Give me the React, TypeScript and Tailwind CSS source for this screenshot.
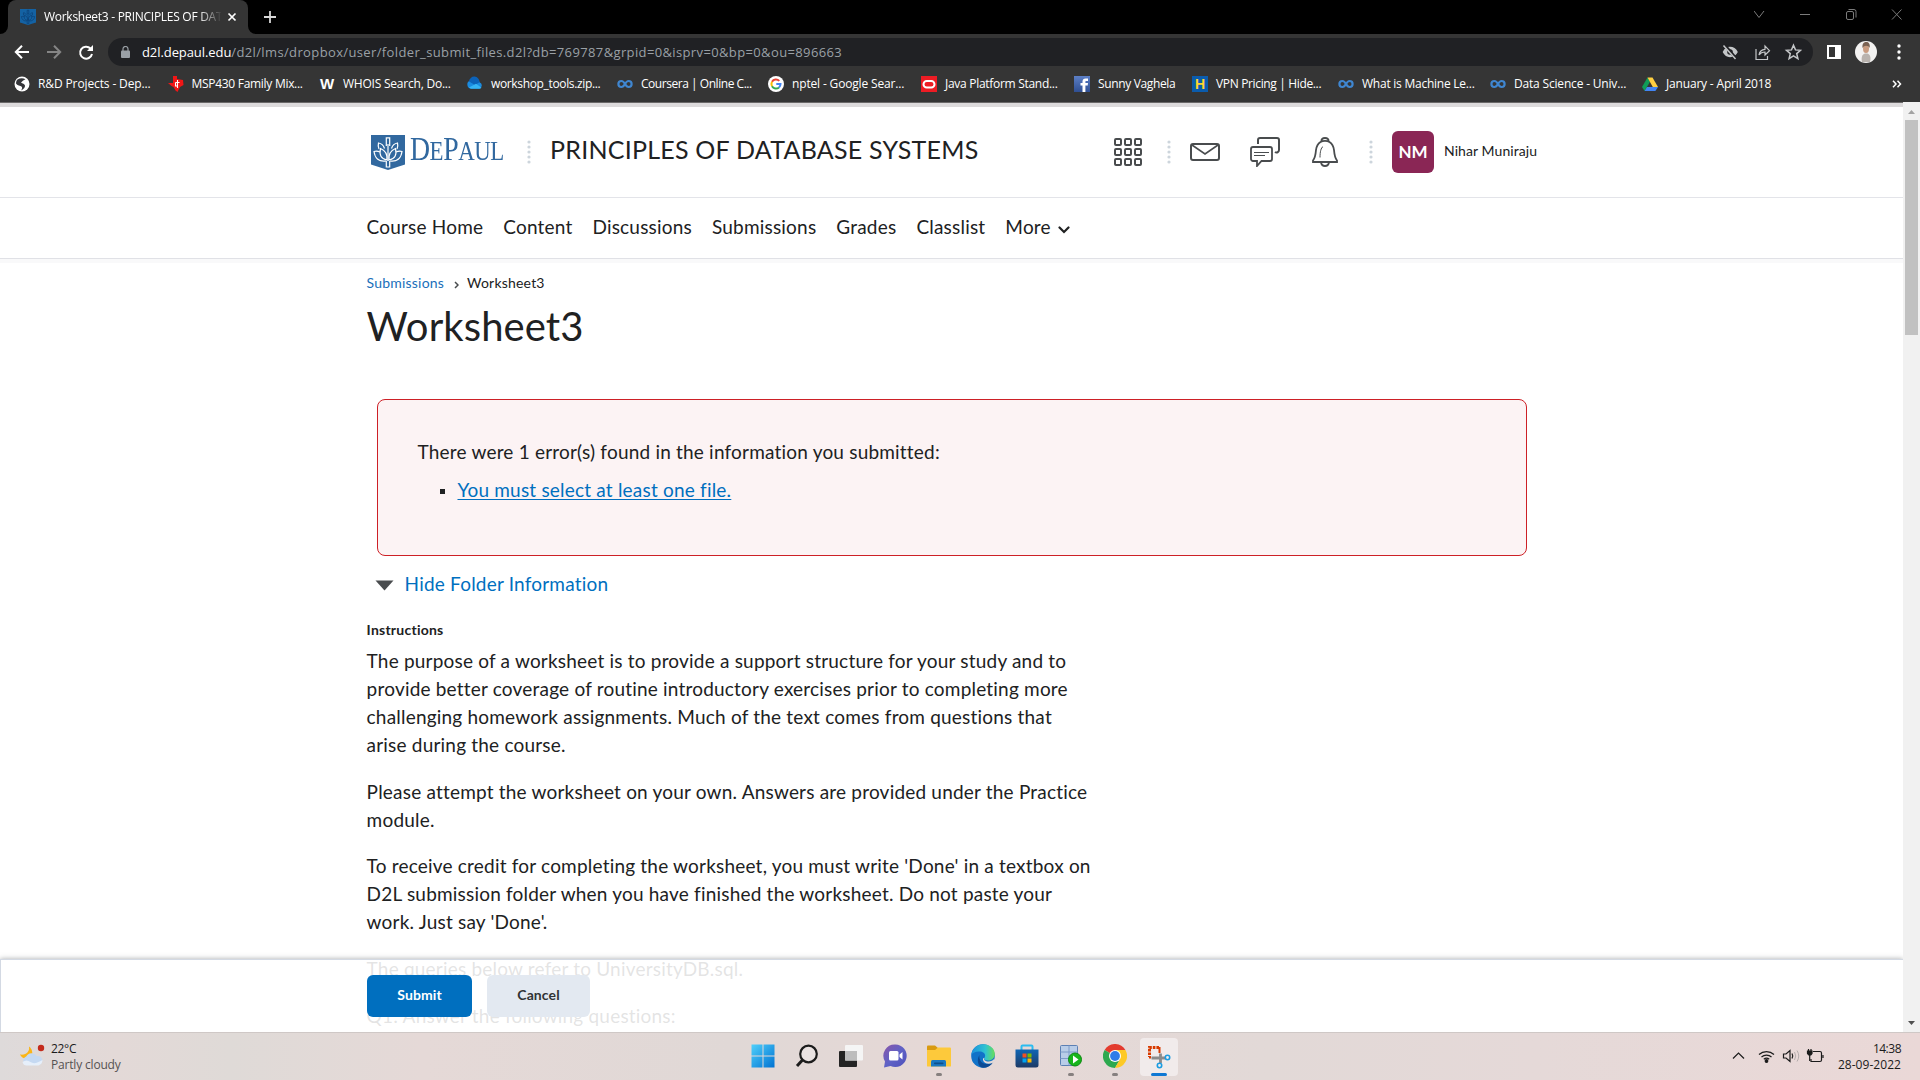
import React from "react";

const UI = "font-['Open_Sans','Noto_Sans',sans-serif]";

function Infinity_() {
  return (
    <svg width="16" height="16" viewBox="0 0 16 16" fill="none" stroke="#3f86d0" strokeWidth="2.200">
      <path d="M8 8C6.800 5.800 5.800 5 4.400 5a3 3 0 0 0 0 6C5.800 11 6.800 10.200 8 8s2.200-3 3.600-3a3 3 0 0 1 0 6C10.200 11 9.200 10.200 8 8z" />
    </svg>
  );
}

const Globe = () => (
  <svg width="16" height="16" viewBox="0 0 16 16">
    <circle cx="8" cy="8" r="7.500" fill="#fff" />
    <path d="M3.500 3.500C6 2 9 2 11.500 3.200 9.500 4 8 5 7 6.800c1.500.8 3.500 1 4 2.700.3 2-1.500 3.800-4 5 1-1.500 1.500-2.500.8-3.800C6.500 9.500 3 9.500 2 7.500c0-1.500.5-3 1.500-4z" fill="#35363a" />
  </svg>
);
const Texas = () => (
  <svg width="16" height="16" viewBox="0 0 16 16">
    <path d="M5 0h4v3l6 1 .5 5-3.500 2-2.500 5-2-1.500L5.500 11 3.500 10 0 7h5z" fill="#f01616" />
    <path d="M9.500 4v8M7.500 6.500h4M7.500 6.500v3.500h2.500" stroke="#fff" strokeWidth="1.100" fill="none" />
  </svg>
);
const LetterW = () => (
  <span className="w-4 text-center text-[15px] leading-4 font-black text-white font-['Liberation_Sans',sans-serif]">W</span>
);
const Cloud = () => (
  <svg width="16" height="16" viewBox="0 0 16 16">
    <path d="M4 12.500a4 4 0 0 1-.5-7.900 5 5 0 0 1 9 1.600A3.300 3.300 0 0 1 12.500 12.500z" fill="#1a8be0" />
    <path d="M2 5.500a5 5 0 0 1 10.500.700L8 9z" fill="#0c62b8" />
    <path d="M2 11.500 9 7.800l5.500 4q-.8.900-2 .9H4q-1.200-.2-2-1.200z" fill="#35b4f5" />
  </svg>
);
const Google = () => (
  <svg width="16" height="16" viewBox="0 0 16 16" fill="none" strokeWidth="2">
    <circle cx="8" cy="8" r="8" fill="#fff" />
    <path d="M11.300 4.900A4.600 4.600 0 0 0 4 5.800" stroke="#ea4335" />
    <path d="M4 5.800a4.600 4.600 0 0 0 0 4.400" stroke="#fbbc05" />
    <path d="M4 10.200a4.600 4.600 0 0 0 7 1.200" stroke="#34a853" />
    <path d="M11 11.400A4.600 4.600 0 0 0 12.500 8H8.300" stroke="#4285f4" />
  </svg>
);
const Oracle = () => (
  <svg width="16" height="16" viewBox="0 0 16 16">
    <rect width="16" height="16" fill="#ed1c24" />
    <rect x="2.500" y="5" width="11" height="6.500" rx="3.250" fill="none" stroke="#fff" strokeWidth="2" />
  </svg>
);
const Facebook = () => (
  <svg width="16" height="16" viewBox="0 0 16 16">
    <defs>
      <linearGradient id="fb" x1="0" y1="0" x2="0" y2="1">
        <stop offset="0" stopColor="#5c7fc6" />
        <stop offset="1" stopColor="#2f4f93" />
      </linearGradient>
    </defs>
    <rect width="16" height="16" fill="url(#fb)" />
    <path d="M8.500 16V9.500h-2V7h2V5.500C8.500 3.500 9.700 2.500 11.500 2.500H14V5h-1.600c-.8 0-1 .3-1 1v1H14l-.3 2.500h-2.300V16z" fill="#fff" />
  </svg>
);
const LetterH = () => (
  <span className="w-4 h-4 bg-[#0b5cad] text-center text-[14px] leading-4 font-black text-[#ffd52e] font-['Liberation_Sans',sans-serif]">H</span>
);
const Drive = () => (
  <svg width="16" height="16" viewBox="0 0 16 16">
    <path d="M5.500 1.500 0 11l2.600 4L8 5.800z" fill="#0f9d58" />
    <path d="M5.500 1.500h5L16 11h-5.200z" fill="#ffcf40" />
    <path d="M5 11h11l-2.600 4H2.600z" fill="#4285f4" />
  </svg>
);

const bookmarks = [
  { w: "w-[153.500px]", t: "R&D Projects - Dep...", s: "tracking-[-0.120px]", i: <Globe /> },
  { w: "w-[151.500px]", t: "MSP430 Family Mix...", s: "tracking-[-0.290px]", i: <Texas /> },
  { w: "w-[148px]", t: "WHOIS Search, Do...", s: "tracking-[-0.220px]", i: <LetterW /> },
  { w: "w-[150px]", t: "workshop_tools.zip...", s: "tracking-[-0.350px]", i: <Cloud /> },
  { w: "w-[151px]", t: "Coursera | Online C...", s: "tracking-[-0.460px]", i: <Infinity_ /> },
  { w: "w-[153px]", t: "nptel - Google Sear...", s: "tracking-[-0.160px]", i: <Google /> },
  { w: "w-[153px]", t: "Java Platform Stand...", s: "tracking-[-0.290px]", i: <Oracle /> },
  { w: "w-[118px]", t: "Sunny Vaghela", s: "tracking-[-0.350px]", i: <Facebook /> },
  { w: "w-[146px]", t: "VPN Pricing | Hide...", s: "tracking-[-0.350px]", i: <LetterH /> },
  { w: "w-[152px]", t: "What is Machine Le...", s: "tracking-[-0.240px]", i: <Infinity_ /> },
  { w: "w-[152px]", t: "Data Science - Univ...", s: "tracking-[-0.180px]", i: <Infinity_ /> },
  { w: "w-[200px]", t: "January - April 2018", s: "tracking-[-0.180px]", i: <Drive /> },
];

function Shield({ w, h, fill, stroke, sw }: { w: number; h: number; fill: string; stroke: string; sw: number }) {
  return (
    <svg width={w} height={h} viewBox="0 0 34 35" preserveAspectRatio="none" className="shrink-0">
      <path d="M0 0h34v29.500L17 35 0 29.500z" fill={fill} />
      <g fill="none" stroke={stroke} strokeWidth={sw}>
        <path d="M15.300 11V2.800h3.400V11M15.300 26v6h3.400v-6" />
        <path d="M17 9v17" />
        <path d="M16 25c-6-1-8-5-6.500-11.500 5 2 7 6 6.500 11.500zM18 25c6-1 8-5 6.500-11.500-5 2-7 6-6.500 11.500z" />
        <path d="M15 26c-7 1-11-2.500-12-9.500 2-.6 4-.4 6 .5M19 26c7 1 11-2.500 12-9.500-2-.6-4-.4-6 .5" />
        <path d="M8 14c-1-2-1-4-.5-6 3 .5 5 2.500 6 5.500M26 14c1-2 1-4 .5-6-3 .5-5 2.500-6 5.500" />
      </g>
    </svg>
  );
}

function Chrome_() {
  return (
    <div className={`flex h-[102px] shrink-0 flex-col bg-[#353535] ${UI}`}>
      <div className="flex h-[34px] bg-black">
        <div className="flex w-[8px] items-end bg-[#353535]">
          <div className="h-full w-full rounded-br-[8px] bg-black" />
        </div>
        <div className="flex w-[240px] bg-black">
          <div className="flex w-full items-center rounded-t-[8px] bg-[#353535] pl-3">
            <Shield w={16} h={16} fill="#1462a3" stroke="#0b3f75" sw={1.500} />
            <div className="ml-2 w-[177px] text-[12px] tracking-[-0.280px] whitespace-nowrap text-white [mask-image:linear-gradient(to_right,black_154px,transparent_178px)]">
              Worksheet3 - PRINCIPLES OF DAT
            </div>
            <svg width="10" height="10" viewBox="0 0 10 10" className="ml-[6px]" stroke="#fff" strokeWidth="1.700">
              <path d="M1.500 1.500l7 7M8.500 1.500l-7 7" />
            </svg>
          </div>
        </div>
        <div className="flex w-[8px] bg-[#353535]">
          <div className="h-full w-full rounded-bl-[8px] bg-black" />
        </div>
        <svg width="14" height="34" viewBox="0 0 14 34" className="ml-[7px]" stroke="#d8d8d8" strokeWidth="1.800">
          <path d="M1 17h12M7 11v12" />
        </svg>
        <svg width="150" height="34" viewBox="0 0 150 34" className="mr-[16px] ml-auto" fill="none" stroke="#7b7b7b" strokeWidth="1">
          <path d="M0 11l5 6.500 5-6.500M46 14.500h10" />
          <rect x="92.500" y="11.500" width="7" height="8" rx="1.500" />
          <path d="M94.500 9.500h5.500a2 2 0 0 1 2 2v6M138 9.500l9.500 10M147.500 9.500l-9.500 10" />
        </svg>
      </div>
      <div className="flex h-[36px] items-center">
        <svg width="84" height="20" viewBox="0 0 84 20" className="ml-[14px]" fill="none" strokeWidth="2">
          <path d="M15 10H2M8 3.800 1.800 10 8 16.200" stroke="#fff" />
          <path d="M33 10h13M40 3.800 46.200 10 40 16.200" stroke="#858585" />
          <path d="M76.500 6.500A6 6 0 1 0 78 12" stroke="#fff" />
          <path d="M79 3v6h-6z" fill="#fff" stroke="none" />
        </svg>
        <div className="ml-[10px] flex h-[28px] w-[1705px] items-center rounded-full bg-[#202124] pl-[13px]">
          <svg width="9" height="12" viewBox="0 0 9 12">
            <rect x="0" y="4.500" width="9" height="7.500" rx="1" fill="#9aa0a6" />
            <path d="M2 5V3a2.500 2.500 0 0 1 5 0v2" fill="none" stroke="#9aa0a6" strokeWidth="1.200" />
          </svg>
          <div className="ml-[12px] text-[13px] leading-[18px] whitespace-nowrap text-[#9aa0a6]">
            <span className="tracking-[-0.080px] text-white">d2l.depaul.edu</span>
            <span className="tracking-[0.370px]">/d2l/lms/dropbox/user/folder_submit_files.d2l?db=769787&amp;grpid=0&amp;isprv=0&amp;bp=0&amp;ou=896663</span>
          </div>
          <svg width="80" height="18" viewBox="0 0 80 18" className="mr-[11px] ml-auto" fill="none" stroke="#c4c6c8" strokeWidth="1.500">
            <path d="M1.500 9C3 6 5.500 4.500 8 4.500S13.500 6 15 9c-1.500 3-4.500 4.500-7 4.500S3 12 1.500 9z" fill="#c4c6c8" />
            <circle cx="8" cy="9" r="2.800" fill="#202124" stroke="none" />
            <path d="M2.500 2l12 14" stroke="#202124" strokeWidth="3" />
            <path d="M1.500 2.500l12 13.500" />
            <path d="M34 6v10.500h11.500V13M37 12c.5-3.500 2.500-5.500 6-5.700V3l4.500 4.700L43 12V9c-2.500 0-4.500.8-6 3z" strokeWidth="1.200" />
            <path d="M71.500 2.200l2 4.700 5 .4-3.800 3.300 1.200 5-4.400-2.700-4.400 2.700 1.200-5-3.800-3.300 5-.4z" />
          </svg>
        </div>
        <svg width="15" height="14" viewBox="0 0 15 14" className="ml-[14px]">
          <rect width="14" height="14" fill="#fff" />
          <rect x="2" y="2" width="6" height="10" fill="#353535" />
        </svg>
        <svg width="22" height="22" viewBox="0 0 22 22" className="ml-[13px]">
          <circle cx="11" cy="11" r="11" fill="#f3f2f1" />
          <path d="M7 21c-.8-4-.4-7.500 3-8.500h2.500c3 1 3.500 4.500 2.500 8.500z" fill="#b9b3ae" />
          <ellipse cx="11" cy="7.500" rx="3" ry="4.500" fill="#c99c80" />
          <path d="M7.500 7C7 2.500 9 1 11.300 1s4 1.800 3.400 6C13.500 4.500 9.500 3.500 7.500 7z" fill="#7a6252" />
        </svg>
        <svg width="4" height="16" viewBox="0 0 4 16" className="ml-[20px]" fill="#fff">
          <circle cx="2" cy="2" r="1.700" />
          <circle cx="2" cy="8" r="1.700" />
          <circle cx="2" cy="14" r="1.700" />
        </svg>
      </div>
      <div className="flex h-[28px] items-center pl-[14px] text-[12px] text-white">
        {bookmarks.map((b) => (
          <div key={b.t} className={`flex shrink-0 items-center gap-2 whitespace-nowrap ${b.w} ${b.s}`}>
            {b.i}
            <span>{b.t}</span>
          </div>
        ))}
        <svg width="10" height="8" viewBox="0 0 10 8" className="mr-[18px] ml-auto" fill="none" stroke="#fff" strokeWidth="1.500">
          <path d="M1 .8 4 4 1 7.200M5.500.8l3 3.200-3 3.200" />
        </svg>
      </div>
    </div>
  );
}

const Dots = ({ className }: { className: string }) => (
  <svg width="4" height="24" viewBox="0 0 4 24" fill="#cdd5dc" className={`shrink-0 ${className}`}>
    {[2, 7, 12, 17, 22].map((y) => (
      <circle key={y} cx="2" cy={y} r="1.600" />
    ))}
  </svg>
);

function Header() {
  return (
    <header className="flex h-[91px] shrink-0 items-center border-b border-[#e3e4e9] pl-[371px]">
      <Shield w={34} h={35} fill="#31689f" stroke="#fff" sw={1.200} />
      <div className="ml-[5px] h-[36px] w-[95px] shrink-0">
        <div className="origin-left scale-x-[0.815] text-[34px] leading-[29px] tracking-[-0.500px] whitespace-nowrap text-[#31689f] font-['Liberation_Serif',serif]">
          D<span className="text-[28px]">E</span>P<span className="text-[28px]">AUL</span>
        </div>
      </div>
      <Dots className="ml-[22px]" />
      <div className="ml-[19px] w-[545px] shrink-0 pb-[4px] text-[25px] tracking-[0.240px] whitespace-nowrap">PRINCIPLES OF DATABASE SYSTEMS</div>
      <svg width="28" height="28" viewBox="0 0 28 28" fill="none" stroke="#494c4e" strokeWidth="2" className="ml-[19px] shrink-0">
        {[1, 11, 21].map((x) => [1, 11, 21].map((y) => <rect key={`${x}-${y}`} x={x} y={y} width="6" height="6" rx="1" />))}
      </svg>
      <Dots className="ml-[25px]" />
      <svg width="30" height="30" viewBox="0 0 30 30" fill="none" stroke="#494c4e" strokeWidth="2" className="ml-[19px] shrink-0">
        <rect x="1" y="7" width="28" height="16" rx="2" />
        <path d="M2 8l13 9L28 8" strokeWidth="1.600" />
      </svg>
      <svg width="30" height="30" viewBox="0 0 30 30" fill="none" stroke="#494c4e" strokeWidth="2" className="ml-[30px] shrink-0">
        <path d="M8 7V3a2 2 0 0 1 2-2h17a2 2 0 0 1 2 2v10a2.500 2.500 0 0 1-4 2" />
        <path d="M3 10h17a2 2 0 0 1 2 2v10a2 2 0 0 1-2 2h-8.500L7 29v-5H3a2 2 0 0 1-2-2V12a2 2 0 0 1 2-2z" strokeWidth="1.800" />
        <path d="M4 15.500h15M4 18.500h11" strokeWidth="1" />
      </svg>
      <svg width="26" height="30" viewBox="0 0 26 30" fill="none" stroke="#494c4e" strokeWidth="1.800" className="ml-[32px] shrink-0">
        <path d="M9.500 4.500C9 2.500 10.500 1 13 1s4 1.500 3.500 3.500M8.500 5C10 4 11.500 3.800 13 3.800S16 4 17.500 5C20.500 7 21.500 9 22 13c.5 6 .8 8 3 10.500v1.500H1v-1.500C3.200 21 3.500 19 4 13c.5-4 1.500-6 4.500-8z" />
        <path d="M9 25.500c.5 2.500 2 3.500 4 3.500s3.500-1 4-3.500" />
        <path d="M11 9.500c-2 1.500-3 5-3 11" strokeWidth="1" />
      </svg>
      <Dots className="ml-[31px]" />
      <div className="ml-[19px] flex h-[42px] w-[42px] shrink-0 items-center justify-center rounded-[6px] bg-[#8a2655] text-[17px] font-bold text-white">NM</div>
      <div className="ml-[10px] pb-[3px] text-[14px] tracking-[0.080px] whitespace-nowrap">Nihar Muniraju</div>
    </header>
  );
}

const navItems = ["Course Home", "Content", "Discussions", "Submissions", "Grades", "Classlist", "More"];

function Page() {
  return (
    <main className="relative flex h-[925px] w-[1903px] flex-col overflow-hidden bg-white text-[#202122] font-['Lato',sans-serif]">
      <Header />
      <nav className="flex h-[61px] shrink-0 items-center gap-[20px] border-b border-[#e0e1e6] pb-[1px] pl-[366.500px] text-[19px] tracking-[0.200px]">
        {navItems.map((n) => (
          <span key={n}>{n}</span>
        ))}
        <svg width="12" height="8" viewBox="0 0 12 8" className="mt-[4px] ml-[-13px]" fill="none" stroke="#202122" strokeWidth="2.200" strokeLinecap="round">
          <path d="M1.500 1.500 6 6l4.500-4.500" />
        </svg>
      </nav>
      <div className="h-[4px] shrink-0 bg-[#f9f9fa]" />
      <div className="flex flex-col pl-[366.600px]">
        <div className="mt-[10px] flex h-[20px] items-center text-[14px] leading-[20px] tracking-[0.200px]">
          <span className="text-[#1a6fba]">Submissions</span>
          <svg width="5" height="8" viewBox="0 0 5 8" className="mt-[3px] ml-[10px]" fill="none" stroke="#494c4e" strokeWidth="1.500">
            <path d="M1 1l3 3-3 3" />
          </svg>
          <span className="ml-[8px]">Worksheet3</span>
        </div>
        <h1 className="mt-[9px] h-[48px] text-[40px] leading-[48px] tracking-[0.100px]">Worksheet3</h1>
        <section className="mt-[49px] ml-[10.400px] flex h-[157px] w-[1150px] flex-col rounded-[8px] border border-[#cd2026] bg-[#fcf3f4] pl-[39.500px] text-[19px] leading-[28px] tracking-[0.200px]">
          <p className="mt-[38px]">There were 1 error(s) found in the information you submitted:</p>
          <div className="mt-[10px] flex items-center">
            <span className="mt-[2px] ml-[23px] h-[5px] w-[5px] bg-[#202122]" />
            <a className="ml-[12px] text-[#006fbf] underline underline-offset-[2px]">You must select at least one file.</a>
          </div>
        </section>
        <div className="mt-[14px] flex h-[28px] items-center pl-[8px] text-[19px] tracking-[0.200px] text-[#006fbf]">
          <svg width="19" height="11" viewBox="0 0 19 11" className="mt-[3px] mr-[11px]">
            <path d="M.5.500h18L9.500 10.500z" fill="#494c4e" />
          </svg>
          Hide Folder Information
        </div>
        <h2 className="mt-[22px] h-[20px] text-[14px] leading-[20px] font-bold tracking-[0.240px]">Instructions</h2>
        <div className="mt-[7px] flex flex-col gap-[19px] text-[19px] leading-[27.900px] tracking-[0.200px] whitespace-nowrap">
          <p>
            The purpose of a worksheet is to provide a support structure for your study and to
            <br />
            provide better coverage of routine introductory exercises prior to completing more
            <br />
            challenging homework assignments. Much of the text comes from questions that
            <br />
            arise during the course.
          </p>
          <p>
            Please attempt the worksheet on your own. Answers are provided under the Practice
            <br />
            module.
          </p>
          <p>
            To receive credit for completing the worksheet, you must write 'Done' in a textbox on
            <br />
            D2L submission folder when you have finished the worksheet. Do not paste your
            <br />
            work. Just say 'Done'.
          </p>
          <p>The queries below refer to UniversityDB.sql.</p>
          <p>Q1: Answer the following questions:</p>
        </div>
      </div>
      <div className="absolute inset-x-0 bottom-0 flex h-[73px] gap-[15px] border-t border-l border-[#d3d9e3] bg-white/88 pt-[15px] pl-[366px] text-[14px] font-bold tracking-[0.100px] shadow-[0_0_5px_rgba(80,85,90,0.500)]">
        <button className="h-[42px] w-[105px] rounded-[6px] bg-[#006fbf] pb-[3px] text-white">Submit</button>
        <button className="h-[42px] w-[103px] rounded-[6px] bg-[#e3e9f1] pb-[3px] text-[#303335]">Cancel</button>
      </div>
    </main>
  );
}

function Scrollbar() {
  return (
    <div className="flex w-[17px] flex-col items-center bg-[#f1f1f1]">
      <svg width="7" height="4" viewBox="0 0 7 4" className="mt-[8px]" fill="#a3a3a3">
        <path d="M0 4h7L3.500 0z" />
      </svg>
      <div className="mt-[6px] h-[215px] w-[13px] bg-[#c1c1c1]" />
      <svg width="7" height="4" viewBox="0 0 7 4" className="mt-auto mb-[7px]" fill="#505050">
        <path d="M0 0h7L3.500 4z" />
      </svg>
    </div>
  );
}

const apps: { icon: React.ReactNode; dot?: boolean }[] = [
  {
    icon: (
      <svg width="24" height="24" viewBox="0 0 24 24">
        <defs>
          <linearGradient id="win" x1="0" y1="0" x2="1" y2="1">
            <stop offset="0" stopColor="#4fd0fb" />
            <stop offset="1" stopColor="#0072d2" />
          </linearGradient>
        </defs>
        <path d="M.5.500h11v11H.5zM12.500.500h11v11h-11zM.5 12.500h11v11H.5zM12.500 12.500h11v11h-11z" fill="url(#win)" />
      </svg>
    ),
  },
  {
    icon: (
      <svg width="24" height="24" viewBox="0 0 24 24" fill="none" stroke="#1c1c1c">
        <circle cx="13.500" cy="10" r="8.300" strokeWidth="2.200" fill="#f1eeee" fillOpacity=".5" />
        <path d="M7.500 16 2 22" strokeWidth="3" />
      </svg>
    ),
  },
  {
    icon: (
      <svg width="24" height="24" viewBox="0 0 24 24">
        <rect x="0" y="7" width="18" height="16" rx="1" fill="#242424" />
        <rect x="6" y="1" width="18" height="15.500" rx="1" fill="#f5f5f5" />
        <rect x="6" y="7" width="12" height="9.500" fill="#bdbdbd" />
      </svg>
    ),
  },
  {
    icon: (
      <svg width="24" height="24" viewBox="0 0 24 24">
        <defs>
          <linearGradient id="tm" x1="0" y1="0" x2="1" y2="1">
            <stop offset="0" stopColor="#8a56a8" />
            <stop offset=".5" stopColor="#5f62c6" />
            <stop offset="1" stopColor="#4e50bb" />
          </linearGradient>
        </defs>
        <path d="M12.500.500a11.300 11.300 0 1 1-5 21.500L1 23.500l1-6A11.300 11.300 0 0 1 12.500.500z" fill="url(#tm)" />
        <rect x="6" y="7" width="9.500" height="9.500" rx="1.500" fill="#fff" />
        <path d="M16.500 10.500 19.500 8v7.500l-3-2.500z" fill="#fff" />
      </svg>
    ),
  },
  {
    dot: true,
    icon: (
      <svg width="24" height="24" viewBox="0 0 24 24">
        <path d="M0 2.500Q0 1.500 1 1.500h7l3 2.500v4H0z" fill="#d99a10" />
        <path d="M0 6h8l3-2.500h12q1 0 1 1V22q0 .5-1 .5H1q-1 0-1-.5z" fill="#fdc93b" />
        <path d="M4 22.500v-5q0-1.500 1.500-1.500h12q1.500 0 1.500 1.500v5z" fill="#1a78c2" />
        <rect x="7" y="18.500" width="9.500" height="1.700" rx=".8" fill="#0d4f8c" />
      </svg>
    ),
  },
  {
    icon: (
      <svg width="24" height="24" viewBox="0 0 24 24">
        <defs>
          <linearGradient id="ed" x1="0" y1=".3" x2="1" y2=".3">
            <stop offset="0" stopColor="#1c8fdc" />
            <stop offset=".6" stopColor="#2fc3d2" />
            <stop offset="1" stopColor="#68de58" />
          </linearGradient>
        </defs>
        <circle cx="12" cy="12" r="11.800" fill="#1172c8" />
        <path d="M.3 11C1 4.500 6 .200 12 .200c7 0 11.800 4.500 11.800 9.800 0 4-3 6.500-6.500 6.500-3 0-4.500-1.200-4-2.500 2-2.500.5-6-4-6.500C5.500 7 1.500 8.500.3 11z" fill="url(#ed)" />
        <path d="M8.500 11c-1 5 2.500 9 7 9 2.500 0 4.500-.7 6.500-2-2 4-6 6-10 5.800C6.500 23 5.500 15 8.500 11z" fill="#0b4a94" />
        <path d="M13.300 14c-.8 1.800 1 3.500 4.200 3.500 2.500 0 4.500-1 5.500-2.500l1 2-2.500 2c-4 1.500-9 .5-9.500-3-.2-1.300.3-2.300 1.300-2z" fill="#e3dad8" />
      </svg>
    ),
  },
  {
    icon: (
      <svg width="24" height="24" viewBox="0 0 24 24">
        <defs>
          <linearGradient id="st" x1="0" y1="0" x2="0" y2="1">
            <stop offset="0" stopColor="#0f66b5" />
            <stop offset="1" stopColor="#1d3a66" />
          </linearGradient>
        </defs>
        <path d="M6.500 7V2.500q0-1 1-1h9q1 0 1 1V7" fill="none" stroke="#2bbcf0" strokeWidth="2" />
        <path d="M.5 5.500h23V21q0 2.500-2.500 2.500H3Q.5 23.500.5 21z" fill="url(#st)" />
        <path d="M7.500 9.500h4v4h-4z" fill="#f25022" />
        <path d="M12.500 9.500h4v4h-4z" fill="#7fba00" />
        <path d="M7.500 14.500h4v4h-4z" fill="#00a4ef" />
        <path d="M12.500 14.500h4v4h-4z" fill="#ffb900" />
      </svg>
    ),
  },
  {
    dot: true,
    icon: (
      <svg width="24" height="24" viewBox="0 0 24 24">
        <rect x="1.500" y="1.500" width="17" height="20" rx="1" fill="#b9cde8" stroke="#5c80b4" />
        <path d="M1.500 8h17M1.500 14.500h17M10 1.500v20" stroke="#7d9bc8" />
        <circle cx="16" cy="15.500" r="6.500" fill="#17b51b" stroke="#0c8a10" />
        <path d="M14 11.500v8l5.500-4z" fill="#fff" />
      </svg>
    ),
  },
  {
    dot: true,
    icon: (
      <svg width="24" height="24" viewBox="0 0 24 24">
        <path d="M12 12 1.600 6A12 12 0 0 1 22.400 6z" fill="#e33b2e" />
        <path d="M1.600 6A12 12 0 0 0 12 24l5.200-9L12 12z" fill="#2da94f" />
        <path d="M22.400 6H12l5.200 9L12 24A12 12 0 0 0 22.400 6z" fill="#fdc926" />
        <circle cx="12" cy="12" r="6" fill="#fff" />
        <circle cx="12" cy="12" r="4.900" fill="#2e7ce8" />
      </svg>
    ),
  },
];

function Taskbar() {
  return (
    <footer className={`grid h-[48px] grid-cols-[741px_440px_1fr] items-center border-t border-[#cfc8c6] bg-[linear-gradient(90deg,#dedada_0%,#e3d9d7_6%,#dfdad7_12%,#e5d9d7_22%,#e0d8d6_38%,#e6d8d6_50%,#e2d9d7_66%,#e5d9d8_80%,#ead8d7_100%)] text-[12px] leading-[16px] text-[#1b1b1b] ${UI}`}>
      <div className="flex items-center pl-[20px]">
        <svg width="25" height="24" viewBox="0 0 25 24" className="mb-[3px]">
          <path d="M9 2.500c1 5-3 9-9 8 1.500 3 4 4.500 7 4 4-.5 6-4 5-7.500C11.500 5 10.500 3.500 9 2.500z" fill="#fbb516" />
          <path d="M6.500 21a4.500 4.500 0 0 1-.3-8.500 6 6 0 0 1 10.500-.5 4.600 4.600 0 0 1 2 9z" fill="#c5d9f2" />
          <path d="M2.500 18q4-3 8 0t12-2q0 4-4 5.500h-12q-3 0-4-3.500z" fill="#e6effa" />
          <circle cx="21" cy="4" r="3.200" fill="#c42b1c" />
        </svg>
        <div className="ml-[6px]">
          <div className="tracking-[-0.300px]">22°C</div>
          <div className="text-[#555252] tracking-[-0.180px]">Partly cloudy</div>
        </div>
      </div>
      <div className="flex">
        {apps.map((a, i) => (
          <div key={i} className="relative flex h-[48px] w-[44px] items-center justify-center pb-[3px]">
            {a.icon}
            {a.dot && <span className="absolute bottom-[5px] left-[19px] h-[3px] w-[6px] rounded-full bg-[#86807f]" />}
          </div>
        ))}
        <div className="flex h-[48px] w-[44px] items-center justify-center pb-[1px]">
          <div className="relative flex h-[38px] w-[38px] items-center justify-center rounded-[4px] bg-[#f1ebeb]">
            <svg width="24" height="24" viewBox="0 0 24 24" fill="none">
              <path d="M12 2.500H2.500V12" stroke="#d83b01" strokeWidth="3" strokeDasharray="2.600 1" />
              <path d="M12.500 2v6M2 12.500h2" stroke="#d83b01" strokeWidth="2" />
              <path d="M13.500 8.500V18M4.500 13H18" stroke="#8b8b8b" strokeWidth="2.800" />
              <circle cx="12.500" cy="20.500" r="2.200" stroke="#1b9de2" strokeWidth="1.600" />
              <circle cx="20.500" cy="12.500" r="2.200" stroke="#1b9de2" strokeWidth="1.600" />
            </svg>
            <span className="absolute bottom-0 left-[11px] h-[3px] w-[16px] rounded-full bg-[#0f78d4]" />
          </div>
        </div>
      </div>
      <div className="flex items-center pr-[19px]">
        <svg width="96" height="20" viewBox="0 0 96 20" className="mb-[2px] ml-auto" fill="none" stroke="#1b1b1b" strokeWidth="1.200">
          <path d="M1 12.500 6.500 7l5.500 5.500" />
          <path d="M27 8.500a11 11 0 0 1 15 0M29.500 11a7.500 7.500 0 0 1 10 0M31.800 13.300a4 4 0 0 1 5.400 0" />
          <circle cx="34.500" cy="15" r="1.300" fill="#1b1b1b" />
          <path d="M51.500 8h2.500l4-3.500v11L54 12h-2.500z" />
          <path d="M60 7.500q1.500 2.500 0 5" />
          <path d="M62.500 6q2.500 4 0 8M65 4.500q3.500 5.500 0 11" stroke="#b5adad" strokeWidth="1" />
          <path d="M81 5.500h7q1.500 0 1.500 1.500v7q0 1.500-1.500 1.500H79V13M91 9v3" />
          <path d="M75.500 5h4.500v2.500q-.8 1.800-2.200 1.800T75.500 7.500zM76.500 3v2M79 3v2M77.700 9.500V15" fill="#1b1b1b" />
        </svg>
        <div className="ml-[0px] w-[73px] text-right">
          <div className="tracking-[-0.500px]">14:38</div>
          <div className="tracking-[0.050px]">28-09-2022</div>
        </div>
      </div>
    </footer>
  );
}

export default function App() {
  return (
    <div className="flex h-[1080px] w-[1920px] flex-col overflow-hidden bg-white">
      <Chrome_ />
      <div className="flex h-[930px] shrink-0">
        <div className="flex w-[1903px] flex-col">
          <div className="h-[5px] shrink-0 border-t border-[#6b6969] bg-[#dddbdc]" />
          <Page />
        </div>
        <Scrollbar />
      </div>
      <Taskbar />
    </div>
  );
}
